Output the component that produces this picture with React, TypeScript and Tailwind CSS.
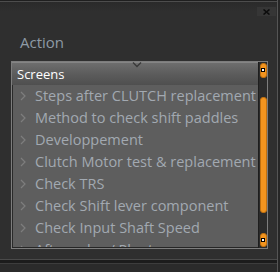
import React from "react";

const items = [
  "Steps after CLUTCH replacement",
  "Method to check shift paddles",
  "Developpement",
  "Clutch Motor test & replacement",
  "Check TRS",
  "Check Shift lever component",
  "Check Input Shaft Speed",
  "After sales / Plants",
];

function Chevron() {
  return (
    <svg width="6" height="10" viewBox="0 0 6 10" className="shrink-0">
      <path d="M1 1 L5 5 L1 9" fill="none" stroke="#7e7e7e" strokeWidth="1.2" />
    </svg>
  );
}

function ScrollButton() {
  return (
    <div className="h-full w-[7px] mx-auto rounded-[3px] bg-[#f2941f] border border-[#c0700f] flex items-center justify-center">
      <div className="w-[4px] h-[4px] bg-black flex items-center justify-center">
        <div className="w-[2px] h-[2px] bg-white" />
      </div>
    </div>
  );
}

export default function App() {
  return (
    <div
      className="w-[280px] h-[272px] bg-[#2f2f2f] flex overflow-hidden"
      style={{ fontFamily: '"Open Sans", "Liberation Sans", sans-serif' }}
    >
      <div className="w-[277px] flex flex-col">
        <div className="h-[1px] bg-[#1f1f1f]" />
        <div className="h-[1px] bg-[#4d4d4d]" />
        <div className="h-[10px] bg-gradient-to-b from-[#2a2a2a] to-[#2f2f2f] relative">
          <div className="absolute right-[1px] top-[5px] w-[19px] h-[9px] bg-[#363636] flex items-center justify-center">
            <svg width="7" height="6" viewBox="0 0 7 6">
              <path d="M0.5 0.5 L6.5 5.5 M6.5 0.5 L0.5 5.5" stroke="#0d0d0d" strokeWidth="1.6" />
            </svg>
          </div>
        </div>
        <div className="h-[49px] pl-[20px] pt-[20px]">
          <div className="text-[15px] leading-[20px] text-[#8e9aa5]">Action</div>
        </div>
        <div className="ml-[11px] w-[257px] h-[188px] border border-[#7d7d7d] flex relative">
          <svg width="10" height="6" viewBox="0 0 10 6" className="absolute left-[120px] top-[0px]">
            <path d="M1 0.5 L5 4.5 L9 0.5" fill="none" stroke="#3a3a3a" strokeWidth="1.4" />
          </svg>
          <div className="flex-1 flex flex-col overflow-hidden bg-[#5e5e5e] border-b border-[#262626]">
            <div className="h-[23px] shrink-0 bg-gradient-to-b from-[#6e6e6e] via-[#5c5c5c] to-[#4f4f4f] border-t border-[#858585] flex items-center pl-[5px]">
              <span className="text-[13px] text-white leading-none">Screens</span>
            </div>
            <div className="flex-1 border-l border-[#2a2a2a] overflow-hidden">
              {items.map((t) => (
                <div key={t} className="h-[22px] flex items-center pl-[7px] gap-[9px] shrink-0">
                  <Chevron />
                  <span className="text-[14.5px] leading-none text-[#a2a9b1] whitespace-nowrap">{t}</span>
                </div>
              ))}
            </div>
          </div>
          <div className="w-[9px] bg-[#2b2b2b] border-l border-[#1e1e1e] flex flex-col py-[1px]">
            <div className="h-[15px]"><ScrollButton /></div>
            <div className="h-[19px]" />
            <div className="h-[117px] w-[7px] mx-auto rounded-[3px] bg-[#f2941f] border border-[#c0700f]" />
            <div className="h-[20px]" />
            <div className="h-[14px]"><ScrollButton /></div>
          </div>
        </div>
        <div className="h-[10px]" />
        <div className="h-[1px] bg-[#4a4a4a]" />
        <div className="h-[3px] bg-[#1c1c1c]" />
        <div className="h-[1px] bg-[#3d3d3d]" />
        <div className="flex-1 bg-[#2b2b2b]" />
      </div>
      <div className="w-[1px] bg-[#555555]" />
      <div className="flex-1 bg-[#262626]" />
    </div>
  );
}
